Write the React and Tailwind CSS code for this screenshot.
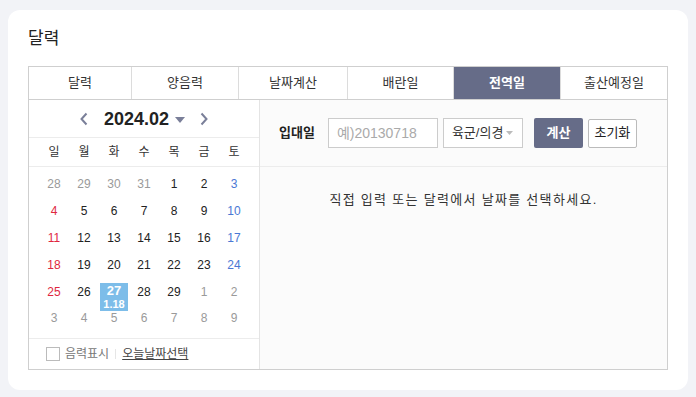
import React from 'react';

const tabs = [
  ['달력', 'w-[102px]'],
  ['양음력', 'w-[107px]'],
  ['날짜계산', 'w-[109px]'],
  ['배란일', 'w-[106px]'],
  ['전역일', 'w-[107px]'],
  ['출산예정일', 'flex-1'],
];
const weekdays = ['일', '월', '화', '수', '목', '금', '토'];

// [day, inMonth]
const weeks = [
  [[28, 0], [29, 0], [30, 0], [31, 0], [1, 1], [2, 1], [3, 1]],
  [[4, 1], [5, 1], [6, 1], [7, 1], [8, 1], [9, 1], [10, 1]],
  [[11, 1], [12, 1], [13, 1], [14, 1], [15, 1], [16, 1], [17, 1]],
  [[18, 1], [19, 1], [20, 1], [21, 1], [22, 1], [23, 1], [24, 1]],
  [[25, 1], [26, 1], [27, 1], [28, 1], [29, 1], [1, 0], [2, 0]],
  [[3, 0], [4, 0], [5, 0], [6, 0], [7, 0], [8, 0], [9, 0]],
];

function dayColor(col, inMonth) {
  if (!inMonth) return 'text-[#9a9a9a]';
  if (col === 0) return 'text-[#e0283f]';
  if (col === 6) return 'text-[#4a78d4]';
  return 'text-[#222]';
}

function Calendar() {
  return (
    <div className="w-[231px] border-r border-[#e4e4e4] bg-white flex flex-col">
      <div className="h-[38px] flex items-center justify-center border-b border-[#ececec] text-[#7a7f99]">
        <svg width="10" height="14" viewBox="0 0 10 14" className="mr-[15px]">
          <path d="M7.5 1.5 L2.5 7 L7.5 12.5" fill="none" stroke="currentColor" strokeWidth="2" />
        </svg>
        <span className="text-[18px] font-bold text-[#222] leading-none">2024.02</span>
        <svg width="10" height="6" viewBox="0 0 10 6" className="ml-[6px] mt-[2px]">
          <path d="M0 0 L10 0 L5 6 Z" fill="#7a7f99" />
        </svg>
        <svg width="10" height="14" viewBox="0 0 10 14" className="ml-[14px]">
          <path d="M2.5 1.5 L7.5 7 L2.5 12.5" fill="none" stroke="currentColor" strokeWidth="2" />
        </svg>
      </div>
      <div className="h-[29px] grid grid-cols-7 px-[10px] items-center border-b border-[#ececec] text-[12px] text-[#333]">
        {weekdays.map((w) => (
          <span key={w} className="text-center">{w}</span>
        ))}
      </div>
      <div className="pt-[4px] px-[10px] h-[171px]">
        {weeks.map((wk, r) => (
          <div key={r} className="grid grid-cols-7 h-[26.8px]">
            {wk.map(([d, m], c) => {
              const sel = r === 4 && d === 27;
              return (
                <div key={c} className="relative flex items-center justify-center">
                  {sel ? (
                    <div className="absolute left-[1px] right-[1px] top-[5px] h-[28px] bg-[#7dbde9] flex flex-col items-center text-white font-bold z-10">
                      <span className="text-[13px] leading-[16px]">27</span>
                      <span className="text-[11px] leading-[11px]">1.18</span>
                    </div>
                  ) : (
                    <span className={`text-[12px] ${dayColor(c, m)}`}>{d}</span>
                  )}
                </div>
              );
            })}
          </div>
        ))}
      </div>
      <div className="flex-1 border-t border-[#ececec] flex items-center pl-[17px] text-[12px]">
        <span className="w-[14px] h-[14px] border border-[#bbb] bg-white mr-[5px]" />
        <span className="text-[#777]">음력표시</span>
        <span className="mx-[6px] w-px h-[10px] bg-[#e6e6e6]" />
        <span className="text-[#444] underline">오늘날짜선택</span>
      </div>
    </div>
  );
}

function Form() {
  return (
    <div className="flex-1 bg-[#fbfbfb] flex flex-col">
      <div className="h-[67px] border-b border-[#ececec] flex items-center pl-[19px]">
        <span className="text-[13px] font-bold text-[#222] mr-[13px]">입대일</span>
        <div className="w-[110px] h-[30px] border border-[#ccc] bg-white flex items-center pl-[8px] text-[14px] text-[#aaa]">
          예)20130718
        </div>
        <div className="ml-[5px] w-[80px] h-[30px] border border-[#ccc] bg-white flex items-center pl-[8px] text-[13px] text-[#333]">
          육군/의경
          <svg width="7" height="4" viewBox="0 0 7 4" className="ml-[3px]">
            <path d="M0 0 L7 0 L3.5 4 Z" fill="#bbb" />
          </svg>
        </div>
        <button className="ml-[11px] w-[49px] h-[30px] rounded-[2px] bg-[#666c88] text-white text-[13px] font-bold">
          계산
        </button>
        <button className="ml-[5px] w-[49px] h-[29px] border border-[#bbb] rounded-[2px] bg-white text-[#222] text-[13px]">
          초기화
        </button>
      </div>
      <div className="pt-[23px] text-center text-[13px] text-[#333] tracking-[1.3px]">
        직접 입력 또는 달력에서 날짜를 선택하세요.
      </div>
    </div>
  );
}

export default function App() {
  return (
    <div
      className="w-[696px] h-[397px] bg-[#f2f3f7] pt-[10px] px-[8px]"
      style={{ fontFamily: '"Liberation Sans", "Noto Sans CJK KR", sans-serif' }}
    >
      <div className="h-[380px] bg-white rounded-[12px] px-[20px] pt-[17px]">
        <h2 className="text-[17px] leading-[24px] text-[#222] mb-[15px]">달력</h2>
        <div className="flex border border-[#cfcfcf] h-[34px]">
          {tabs.map(([t, w], i) => {
            const active = t === '전역일';
            return (
              <div
                key={t}
                className={`${w} flex items-center justify-center text-[13px] ${i > 0 ? 'border-l border-[#dcdcdc]' : ''} ${
                  active ? 'bg-[#666c88] text-white font-bold border-[#555a75]' : 'text-[#333]'
                }`}
              >
                {t}
              </div>
            );
          })}
        </div>
        <div className="flex h-[270px] border border-t-0 border-[#cfcfcf]">
          <Calendar />
          <Form />
        </div>
      </div>
    </div>
  );
}
